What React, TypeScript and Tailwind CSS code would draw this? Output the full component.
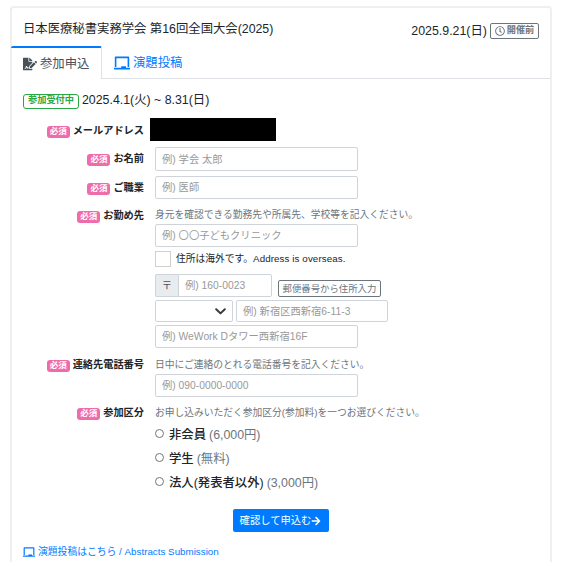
import type { ReactNode } from 'react'
import { FaArrowRight, FaChalkboard, FaFileSignature, FaRegClock } from 'react-icons/fa'

const plans = [
  { name: '非会員', price: '(6,000円)' },
  { name: '学生', price: '(無料)' },
  { name: '法人(発表者以外)', price: '(3,000円)' },
]

const inputClass =
  'block rounded-[2px] border border-[#ced4da] bg-white px-[6px] text-[10.3px] text-[#495057] outline-none placeholder:text-[#999] placeholder:opacity-100'

function Row({ label, className, children }: { label: string; className: string; children: ReactNode }) {
  return (
    <div className={`flex ${className}`}>
      <div className="flex h-[23px] w-[132px] shrink-0 items-center justify-end gap-[3px]">
        <span className="mt-[2px] flex h-[12px] w-[23px] items-center justify-center rounded-[3px] bg-[#ef6cab] text-[8.5px] leading-none font-bold text-white">
          必須
        </span>
        <span className="text-[10.2px] leading-[15px] font-bold whitespace-nowrap text-[#212529]">{label}</span>
      </div>
      <div className="ml-[11px]">{children}</div>
    </div>
  )
}

function Hint({ children }: { children: ReactNode }) {
  return <p className="h-[14px] text-[9.76px] leading-[15px] whitespace-nowrap text-[#6c757d]">{children}</p>
}

function App() {
  return (
    <div className="h-[562px] overflow-hidden bg-white px-[10px] pt-[6px] font-['Liberation_Sans','Noto_Sans_CJK_JP',sans-serif] text-[12.35px] text-[#212529]">
      <div className="h-[570px] w-[542px] rounded-[4px] border-2 border-[#efefef]">
        <header className="flex h-[38px] items-center justify-between pr-[11px] pl-[11px]">
          <h1 className="mt-[4px] leading-[18px] whitespace-nowrap">日本医療秘書実務学会 第16回全国大会(2025)</h1>
          <div className="mt-[8px] flex items-center gap-[3px] leading-[18px] whitespace-nowrap">
            <span className="text-[12.4px]">2025.9.21(日)</span>
            <span className="flex h-[16px] w-[49px] items-center justify-center gap-[2px] rounded-[2px] border border-[#6c757d] text-[9.2px] leading-none font-bold text-[#6c757d]">
              <FaRegClock size={10} />
              開催前
            </span>
          </div>
        </header>

        <nav className="-ml-px flex h-[33px] leading-[18px]">
          <a className="flex w-[91px] items-center gap-[3px] rounded-t-[2px] border-t-2 border-r border-t-[#007bff] border-r-[#dee2e6] pl-[12px] whitespace-nowrap text-[#495057]">
            <FaFileSignature size={14} />
            参加申込
          </a>
          <a className="flex flex-1 items-center gap-[3px] border-b border-[#dee2e6] pt-[2px] pl-[12px] whitespace-nowrap text-[#007bff]">
            <FaChalkboard size={16} />
            演題投稿
          </a>
        </nav>

        <div className="mt-[13px] flex h-[16px] items-center gap-[3px] pl-[11px]">
          <span className="mt-[2px] flex h-[15px] w-[56px] items-center justify-center rounded-[3px] border border-[#28a745] text-[9.2px] leading-none font-bold text-[#28a745]">
            参加受付中
          </span>
          <span className="leading-[16px]">2025.4.1(火) ~ 8.31(日)</span>
        </div>

        <form className="mt-[10px]">
          <Row label="メールアドレス" className="h-[29px] pt-[1px]">
            <div className="-mt-[1px] -ml-[5px] h-[23px] w-[126px] bg-black" />
          </Row>
          <Row label="お名前" className="h-[29px]">
            <input className={`${inputClass} h-[24px] w-[203px]`} placeholder="例) 学会 太郎" />
          </Row>
          <Row label="ご職業" className="h-[28px]">
            <input className={`${inputClass} h-[23px] w-[203px]`} placeholder="例) 医師" />
          </Row>
          <Row label="お勤め先" className="h-[149px]">
            <div className="pt-[3px]">
              <Hint>身元を確認できる勤務先や所属先、学校等を記入ください。</Hint>
            </div>
            <input className={`${inputClass} mt-[3px] h-[23px] w-[203px]`} placeholder="例) 〇〇子どもクリニック" />
            <label className="mt-[4px] flex h-[16px] items-center gap-[5px] text-[9.75px] whitespace-nowrap">
              <input type="checkbox" className="size-[16px] appearance-none border border-[#d3d1c8]" />
              <span>
                住所は海外です。<span className="tracking-[0.1px]">Address is overseas.</span>
              </span>
            </label>
            <div className="mt-[7px] flex h-[23px]">
              <span className="flex w-[23px] items-center justify-center rounded-l-[2px] border border-r-0 border-[#ced4da] bg-[#e9ecef] text-[10.3px] text-[#495057]">
                〒
              </span>
              <input className={`${inputClass} h-[23px] w-[94px] rounded-l-none`} placeholder="例) 160-0023" />
              <button
                type="button"
                className="mt-[6px] ml-[6px] h-[17px] w-[103px] rounded-[2px] border border-[#6c757d] text-[9.4px] leading-none whitespace-nowrap text-[#6c757d]"
              >
                郵便番号から住所入力
              </button>
            </div>
            <div className="mt-[3px] flex h-[22px] gap-[3px]">
              <button type="button" className={`${inputClass} flex h-[22px] w-[78px] items-center justify-end`}>
                <svg width="11" height="7" viewBox="0 0 11 7" fill="none" stroke="#343a40" strokeWidth="2" strokeLinecap="round" strokeLinejoin="round">
                  <path d="M1.2 1.2 5.5 5.4 9.8 1.2" />
                </svg>
              </button>
              <input className={`${inputClass} h-[22px] w-[152px]`} placeholder="例) 新宿区西新宿6-11-3" />
            </div>
            <input className={`${inputClass} mt-[3px] h-[23px] w-[203px]`} placeholder="例) WeWork Dタワー西新宿16F" />
          </Row>
          <Row label="連絡先電話番号" className="h-[48px]">
            <div className="pt-[4px]">
              <Hint>日中にご連絡のとれる電話番号を記入ください。</Hint>
            </div>
            <input className={`${inputClass} mt-[3px] h-[23px] w-[203px]`} placeholder="例) 090-0000-0000" />
          </Row>
          <Row label="参加区分" className="h-[108px]">
            <div className="pt-[4px]">
              <Hint>お申し込みいただく参加区分(参加料)を一つお選びください。</Hint>
            </div>
            <div className="mt-[4px]">
              {plans.map((plan) => (
                <label key={plan.name} className="flex h-[24px] items-center leading-[18px] whitespace-nowrap">
                  <input
                    type="radio"
                    name="plan"
                    className="-mt-[4px] mr-[5px] size-[9px] appearance-none rounded-full border border-[#767676]"
                  />
                  <span className="font-medium">{plan.name}</span>
                  <span className="ml-[3px] text-[#6c757d]">{plan.price}</span>
                </label>
              ))}
            </div>
          </Row>
          <div className="flex justify-center pr-px">
            <button
              type="button"
              className="flex h-[23px] w-[96px] items-center justify-center rounded-[2px] bg-[#007bff] text-[10.3px] whitespace-nowrap text-white"
            >
              確認して申込む
              <FaArrowRight size={10} />
            </button>
          </div>
        </form>

        <a className="mt-[13px] flex h-[14px] items-center gap-[3px] pl-[11px] text-[9.8px] whitespace-nowrap text-[#007bff]">
          <FaChalkboard size={12} />
          演題投稿はこちら / Abstracts Submission
        </a>
      </div>
    </div>
  )
}

export default App
